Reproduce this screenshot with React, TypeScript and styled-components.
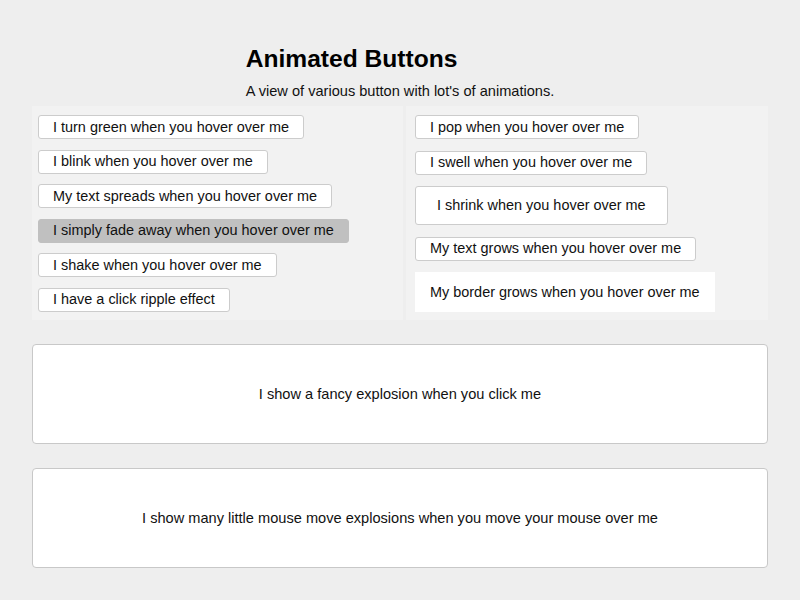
import React from "react";
import styled, { createGlobalStyle } from "styled-components";

const Global = createGlobalStyle`
  html, body { margin: 0; padding: 0; background: #eeeeee; }
  body { font-family: "Liberation Sans", Arial, sans-serif; color: #111; }
`;

const Page = styled.div`
  width: 800px;
  height: 600px;
  box-sizing: border-box;
  padding: 44px 32px 0 32px;
  display: flex;
  flex-direction: column;
`;

const Header = styled.header`
  align-self: center;
  display: flex;
  flex-direction: column;
  gap: 10px;
  margin-bottom: 6px;
`;

const Title = styled.h1`
  margin: 0;
  font-size: 24.6px;
  line-height: 29px;
  font-weight: 700;
  color: #000;
`;

const Subtitle = styled.p`
  margin: 0;
  font-size: 14.6px;
  line-height: 17px;
  color: #111;
`;

const Columns = styled.div`
  display: flex;
  gap: 3px;
`;

const Panel = styled.div<{ $w: number; $pl: number; $gap: number }>`
  width: ${(p) => p.$w}px;
  box-sizing: border-box;
  background: #f2f2f2;
  padding: 9px 8px 8px ${(p) => p.$pl}px;
  display: flex;
  flex-direction: column;
  align-items: flex-start;
  gap: ${(p) => p.$gap}px;
`;

const Button = styled.button<{ $variant?: "fade" | "big" | "plain" }>`
  font-family: "Liberation Sans", Arial, sans-serif;
  font-size: 14.45px;
  line-height: 17px;
  color: #111;
  background: ${(p) => (p.$variant === "fade" ? "#c0c0c0" : "#ffffff")};
  border: 1px solid ${(p) =>
    p.$variant === "fade" ? "#c0c0c0" : p.$variant === "plain" ? "#ffffff" : "#cccccc"};
  border-radius: ${(p) => (p.$variant === "plain" ? "0" : "3px")};
  padding: ${(p) =>
    p.$variant === "big" ? "10px 21px" : p.$variant === "plain" ? "10.5px 14px" : "2.5px 14px"};
  white-space: nowrap;
  cursor: pointer;
`;

const Box = styled.div`
  margin-top: 24px;
  height: 100px;
  box-sizing: border-box;
  background: #fff;
  border: 1px solid #c8c8c8;
  border-radius: 4px;
  display: flex;
  align-items: center;
  justify-content: center;
  font-size: 14.6px;
  color: #111;
`;

export default function App() {
  return (
    <>
      <Global />
      <Page>
        <Header>
          <Title>Animated Buttons</Title>
          <Subtitle>A view of various button with lot's of animations.</Subtitle>
        </Header>
        <Columns>
          <Panel $w={371} $pl={6} $gap={10.6}>
            <Button>I turn green when you hover over me</Button>
            <Button>I blink when you hover over me</Button>
            <Button>My text spreads when you hover over me</Button>
            <Button $variant="fade">I simply fade away when you hover over me</Button>
            <Button>I shake when you hover over me</Button>
            <Button>I have a click ripple effect</Button>
          </Panel>
          <Panel $w={362} $pl={9} $gap={11.5}>
            <Button>I pop when you hover over me</Button>
            <Button>I swell when you hover over me</Button>
            <Button $variant="big">I shrink when you hover over me</Button>
            <Button>My text grows when you hover over me</Button>
            <Button $variant="plain">My border grows when you hover over me</Button>
          </Panel>
        </Columns>
        <Box>I show a fancy explosion when you click me</Box>
        <Box>I show many little mouse move explosions when you move your mouse over me</Box>
      </Page>
    </>
  );
}
